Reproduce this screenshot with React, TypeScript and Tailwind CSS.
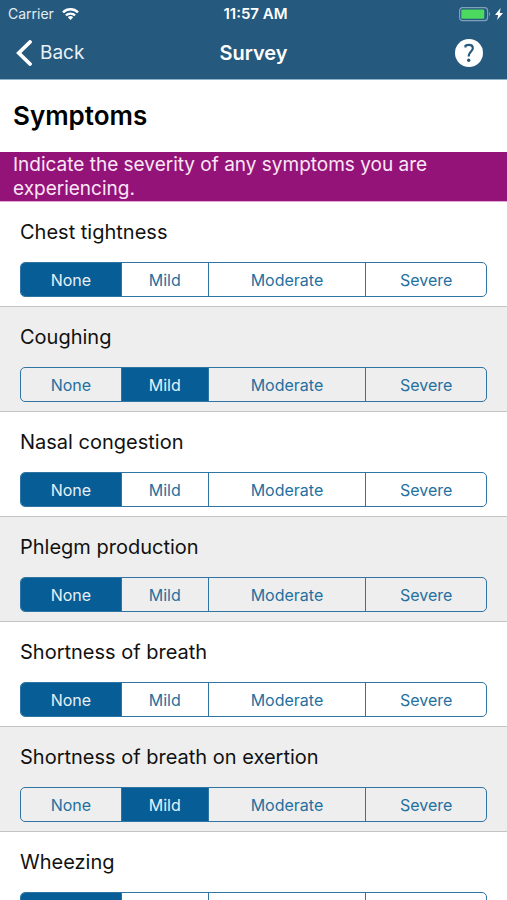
import { useState } from "react";

const LEVELS = ["None", "Mild", "Moderate", "Severe"];

const SYMPTOMS = [
  { name: "Chest tightness", level: "None" },
  { name: "Coughing", level: "Mild" },
  { name: "Nasal congestion", level: "None" },
  { name: "Phlegm production", level: "None" },
  { name: "Shortness of breath", level: "None" },
  { name: "Shortness of breath on exertion", level: "Mild" },
  { name: "Wheezing", level: "None" },
];

function StatusBar() {
  return (
    <div className="grid h-7 grid-cols-[1fr_auto_1fr] items-center pr-1 pl-2 text-sm">
      <div className="flex items-center gap-2 text-[#e3edf4]">
        <span>Carrier</span>
        <svg className="h-3 w-[17px]" viewBox="0 0 17 12" fill="none" aria-label="Wi-Fi">
          <path d="M1 4.400a10.800 10.800 0 0 1 15 0" stroke="white" strokeWidth="2.500" />
          <path d="M3.900 7.400a6.600 6.600 0 0 1 9.200 0" stroke="white" strokeWidth="2.200" />
          <path d="M8.500 12 5.800 9.300a4 4 0 0 1 5.400 0Z" fill="white" />
        </svg>
      </div>
      <span className="text-[15px] font-semibold">11:57 AM</span>
      <div className="flex items-center justify-end gap-1">
        <svg className="h-[15px] w-8" viewBox="0 0 32 15" fill="none" aria-label="Battery">
          <rect x="0.6" y="0.6" width="28" height="13" rx="3" stroke="#7fa2ba" strokeWidth="1.2" />
          <rect x="2.300" y="2.400" width="23" height="9.400" rx="1" fill="#4cd95f" />
          <path d="M30.1 5c1.4.6 1.4 3.600 0 4.200Z" fill="#7fa2ba" />
        </svg>
        <svg className="h-3 w-2" viewBox="0 0 8 12" fill="white" aria-label="Charging">
          <path d="M5.600 0 0 6.900h3.200L2.100 12 8 4.900H4.700Z" />
        </svg>
      </div>
    </div>
  );
}

function NavBar() {
  return (
    <nav className="grid h-[51px] grid-cols-[1fr_auto_1fr] items-center px-4 pb-[2px]">
      <button type="button" className="flex items-center gap-2 justify-self-start text-[19px] leading-7 text-[#e9f1f6]">
        <svg className="h-[26px] w-4" viewBox="0 0 16 26" fill="none" aria-hidden="true">
          <path d="M14 2 2.800 13 14 24" stroke="white" strokeWidth="3.800" strokeLinecap="round" />
        </svg>
        Back
      </button>
      <h1 className="text-xl font-semibold">Survey</h1>
      <button
        type="button"
        aria-label="Help"
        className="mr-2 flex size-7 items-center justify-center justify-self-end rounded-full bg-white"
      >
        <svg className="size-7" viewBox="0 0 28 28" fill="none" aria-hidden="true">
          <path
            d="M10.500 8.500V6.700c1-.5 2-.8 3.300-.8 2.600 0 4 1.300 4 3.300 0 3.400-4.100 3.900-4.100 7.700v.6"
            stroke="#25597d"
            strokeWidth="2.200"
          />
          <circle cx="13.700" cy="21.300" r="1.700" fill="#25597d" />
        </svg>
      </button>
    </nav>
  );
}

function SymptomRow({ name, initial }: { name: string; initial: string }) {
  const [selected, setSelected] = useState(initial);

  return (
    <fieldset className="border-b border-[#c4c4c4] bg-white px-5 pt-[15px] pb-[9px] even:bg-[#eeeeee]">
      <legend className="float-left w-full text-xl leading-[30px] text-[#111111]">{name}</legend>
      <div className="clear-both pt-[15px]">
        <div className="grid h-[35px] grid-cols-[101fr_87fr_158fr_120fr] divide-x divide-[#2f74a3] overflow-hidden rounded-[5px] border border-[#2f74a3]">
          {LEVELS.map((level) => (
            <label
              key={level}
              className="flex cursor-pointer items-center justify-center text-base text-[#24709f] has-checked:bg-[#075e96] has-checked:text-[#e6f0f6]"
            >
              <input
                type="radio"
                className="sr-only"
                name={name}
                value={level}
                checked={selected === level}
                onChange={() => setSelected(level)}
              />
              {level}
            </label>
          ))}
        </div>
      </div>
    </fieldset>
  );
}

export default function App() {
  return (
    <div className="bg-white font-['Inter','Liberation_Sans',sans-serif]">
      <header className="sticky top-0 z-10 border-b border-[#8fb3c9] bg-[#25597d] text-white">
        <StatusBar />
        <NavBar />
      </header>
      <main>
        <h2 className="px-[13px] py-5 text-[26px] leading-8 font-semibold text-black">Symptoms</h2>
        <p className="border-b border-[#e3a9d6] bg-[#941379] px-[13px] pt-px text-[19px] leading-6 text-[#fbe6f6]">
          Indicate the severity of any symptoms you are experiencing.
        </p>
        <form>
          {SYMPTOMS.map((symptom) => (
            <SymptomRow key={symptom.name} name={symptom.name} initial={symptom.level} />
          ))}
        </form>
      </main>
    </div>
  );
}
